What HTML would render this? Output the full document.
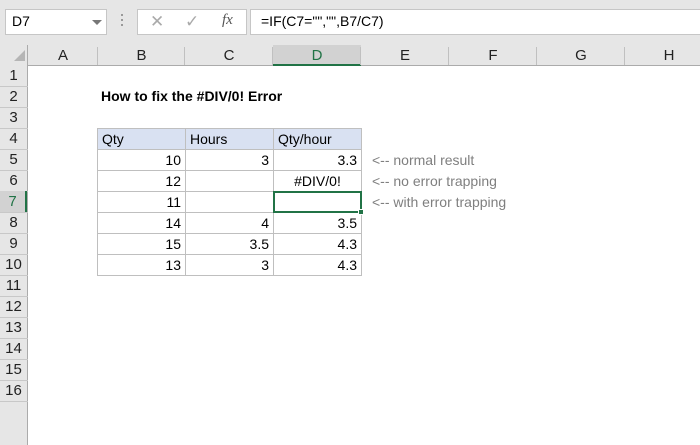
<!DOCTYPE html>
<html><head><style>
body{margin:0;width:700px;height:400px;overflow:hidden;background:#fff;font-family:"Liberation Sans",Calibri,sans-serif;position:relative}
.a{position:absolute;box-sizing:border-box}
.t{font-size:14px;color:#000;line-height:21px;white-space:nowrap}
.c{position:absolute;box-sizing:border-box;border:1px solid #bfbfbf;height:22px;padding:0 4px;font-size:14px;line-height:20px;white-space:nowrap}
</style></head><body>
<div class="a" style="left:0;top:0;width:700px;height:45px;background:#e6e6e6"></div>
<div class="a" style="left:5px;top:9px;width:102px;height:26px;background:#fff;border:1px solid #c6c6c6"></div>
<div class="a t" style="left:12px;top:11px;font-size:14px">D7</div>
<div class="a" style="left:92px;top:20px;width:0;height:0;border-left:5px solid transparent;border-right:5px solid transparent;border-top:5px solid #777"></div>
<div class="a" style="left:121px;top:14px;width:2px;height:2px;background:#999;box-shadow:0 5px #999,0 10px #999"></div>
<div class="a" style="left:137px;top:9px;width:110px;height:26px;background:#fff;border:1px solid #c6c6c6"></div>
<div class="a t" style="left:150px;top:11px;color:#aaa;font-size:17px">✕</div>
<div class="a t" style="left:185px;top:11px;color:#aaa;font-size:17px">✓</div>
<div class="a t" style="left:222px;top:10px;color:#555;font-family:'Liberation Serif',serif;font-style:italic;font-size:15px">fx</div>
<div class="a" style="left:250px;top:9px;width:460px;height:26px;background:#fff;border:1px solid #c6c6c6"></div>
<div class="a t" style="left:261px;top:11px">=IF(C7="","",B7/C7)</div>

<div class="a" style="left:0;top:45px;width:700px;height:21px;background:#e6e6e6;border-bottom:1px solid #ababab"></div>
<div class="a" style="left:273px;top:45px;width:88px;height:21px;background:#d2d2d2;border-bottom:2px solid #217346"></div>
<div class="a" style="left:0;top:45px;width:28px;height:400px;background:#e6e6e6;border-right:1px solid #ababab"></div>
<div class="a" style="left:14px;top:50px;width:0;height:0;border-left:11px solid transparent;border-bottom:11px solid #b5b5b5"></div>
<div id="cols"></div>
<div class="a t" style="left:101px;top:86px;font-weight:bold">How to fix the #DIV/0! Error</div>
<div id="tbl"></div>
<script>
var xs=[28,98,185,273,361,449,537,625,713],L="ABCDEFGH",h="";
for(var i=0;i<8;i++){h+='<div class="a t" style="left:'+xs[i]+'px;top:45px;width:'+(xs[i+1]-xs[i])+'px;text-align:center;font-size:15px;color:'+(i==3?'#217346':'#222')+'">'+L[i]+'</div>';
h+='<div class="a" style="left:'+(xs[i+1]-1)+'px;top:47px;width:1px;height:18px;background:#c0c0c0"></div>';}
for(var r=1;r<=16;r++){var y=66+21*(r-1);
h+='<div class="a t" style="left:0;top:'+(y-1)+'px;width:27px;text-align:center;font-size:15px;'+(r==7?'background:#d2d2d2;color:#217346;border-right:2px solid #217346':'color:#222')+'">'+r+'</div>';
h+='<div class="a" style="left:0;top:'+(y+20)+'px;width:28px;height:1px;background:#c8c8c8"></div>';}
document.getElementById('cols').innerHTML=h;
var d=[["Qty","Hours","Qty/hour"],["10","3","3.3"],["12","","#DIV/0!"],["11","",""],["14","4","3.5"],["15","3.5","4.3"],["13","3","4.3"]];
var cx=[97,185,273,361],t="";
for(var r=0;r<7;r++)for(var c=0;c<3;c++){var y=128+21*r;
var al=r==0?'left':(r==2&&c==2?'center':'right');
t+='<div class="c" style="left:'+cx[c]+'px;top:'+y+'px;width:'+(cx[c+1]-cx[c]+1)+'px;text-align:'+al+(r==0?';background:#d9e1f2':'')+'">'+d[r][c]+'</div>';}
document.getElementById('tbl').innerHTML=t;
</script>
<div class="a" style="left:273px;top:191px;width:89px;height:22px;border:2px solid #217346"></div>
<div class="a" style="left:358px;top:209px;width:6px;height:6px;background:#217346;border:1px solid #fff"></div>
<div class="a t" style="left:372px;top:150px;color:#7f7f7f">&lt;-- normal result</div>
<div class="a t" style="left:372px;top:171px;color:#7f7f7f">&lt;-- no error trapping</div>
<div class="a t" style="left:372px;top:192px;color:#7f7f7f">&lt;-- with error trapping</div>
</body></html>
